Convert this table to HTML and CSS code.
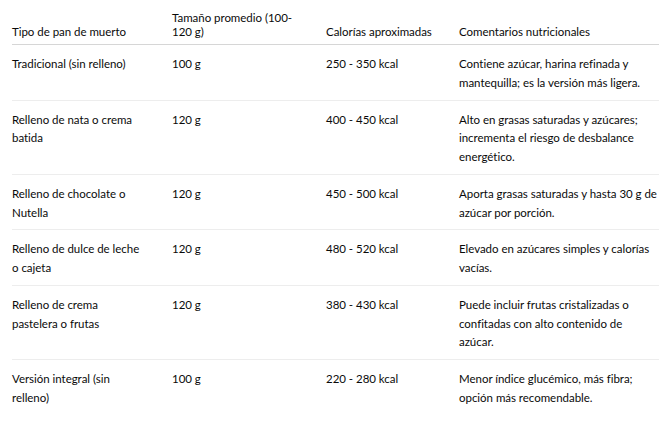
FILE: index.html
```html
<!DOCTYPE html>
<html lang="es">
<head>
<meta charset="utf-8">
<link rel="stylesheet" href="styles.css">
</head>
<body>
<table class="tbl">
  <colgroup>
    <col class="c1"><col class="c2"><col class="c3"><col class="c4">
  </colgroup>
  <thead>
    <tr>
      <th>Tipo de pan de muerto</th>
      <th>Tamaño promedio (100-120 g)</th>
      <th>Calorías aproximadas</th>
      <th>Comentarios nutricionales</th>
    </tr>
  </thead>
  <tbody>
    <tr>
      <td>Tradicional (sin relleno)</td>
      <td>100 g</td>
      <td>250 - 350 kcal</td>
      <td>Contiene azúcar, harina refinada y mantequilla; es la versión más ligera.</td>
    </tr>
    <tr>
      <td>Relleno de nata o crema batida</td>
      <td>120 g</td>
      <td>400 - 450 kcal</td>
      <td>Alto en grasas saturadas y azúcares; incrementa el riesgo de desbalance energético.</td>
    </tr>
    <tr>
      <td>Relleno de chocolate o Nutella</td>
      <td>120 g</td>
      <td>450 - 500 kcal</td>
      <td>Aporta grasas saturadas y hasta 30 g de azúcar por porción.</td>
    </tr>
    <tr>
      <td>Relleno de dulce de leche o cajeta</td>
      <td>120 g</td>
      <td>480 - 520 kcal</td>
      <td>Elevado en azúcares simples y calorías vacías.</td>
    </tr>
    <tr>
      <td>Relleno de crema pastelera o frutas</td>
      <td>120 g</td>
      <td>380 - 430 kcal</td>
      <td>Puede incluir frutas cristalizadas o confitadas con alto contenido de azúcar.</td>
    </tr>
    <tr>
      <td>Versión integral (sin relleno)</td>
      <td>100 g</td>
      <td>220 - 280 kcal</td>
      <td>Menor índice glucémico, más fibra; opción más recomendable.</td>
    </tr>
  </tbody>
</table>
</body>
</html>
```

FILE: styles.css
```css
html, body {
  margin: 0;
  padding: 0;
  background: #ffffff;
}
body {
  padding: 0 4px 0 12px;
  font-family: "Segoe UI", Lato, "Open Sans", sans-serif;
  font-size: 11.5px;
  letter-spacing: -0.03px;
  color: #0a0a0a;
}
.tbl {
  border-collapse: collapse;
  table-layout: fixed;
  width: 647px;
}
.c1 { width: 160px; }
.c2 { width: 154px; }
.c3 { width: 133px; }
.c4 { width: 200px; }
.tbl th {
  font-weight: normal;
  text-align: left;
  vertical-align: bottom;
  line-height: 14px;
  padding: 11px 24px 5px 0;
  border-bottom: 1px solid #d6d6d6;
}
.tbl td {
  vertical-align: top;
  line-height: 18.75px;
  padding: 10px 24px 7px 0;
  border-bottom: 1px solid #ededed;
}
.tbl td:first-child {
  padding-right: 28px;
}
.tbl th:last-child, .tbl td:last-child {
  padding-right: 0;
}
.tbl tbody tr:last-child td {
  border-bottom: none;
}
```
